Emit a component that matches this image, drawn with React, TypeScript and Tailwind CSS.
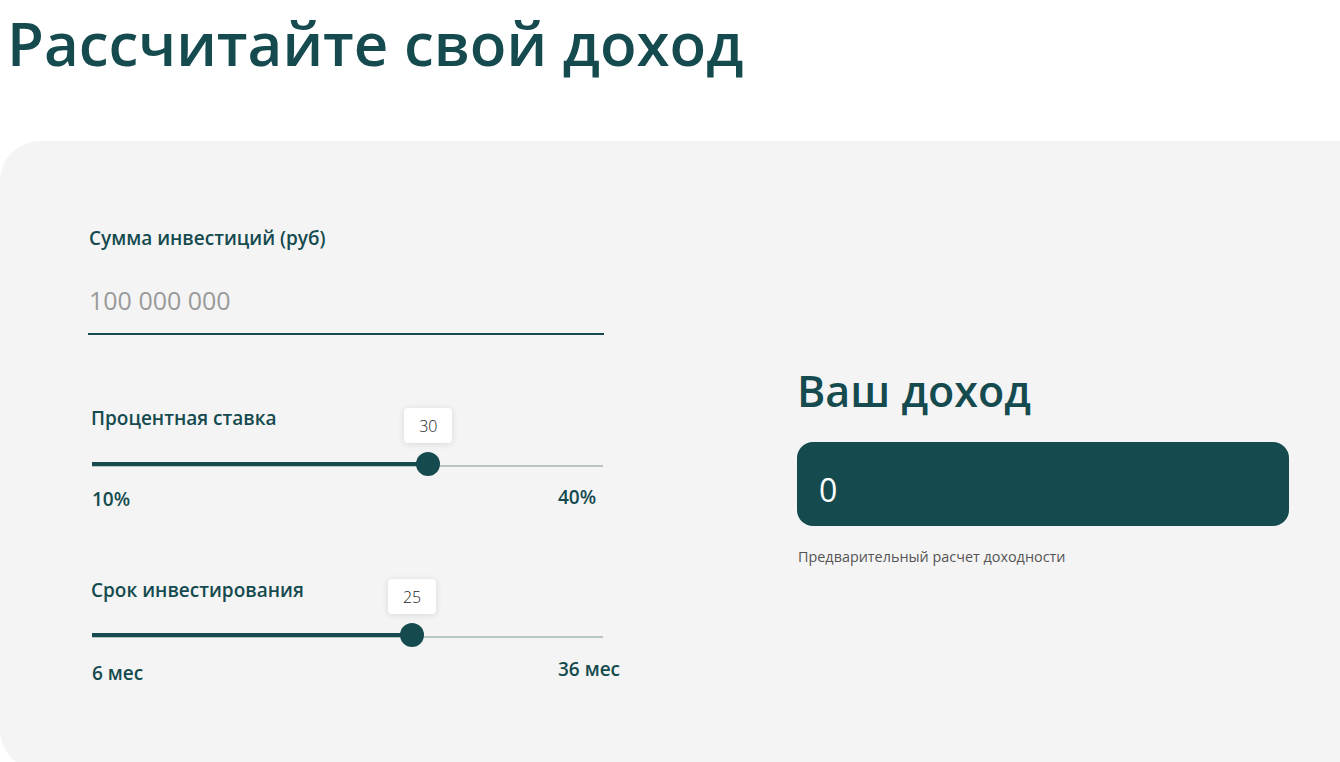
import React from "react";

function Slider({
  label,
  value,
  min,
  max,
  minLabel,
  maxLabel,
  labelGap,
  bottomGap,
  rightRaise,
}: {
  label: string;
  value: number;
  min: number;
  max: number;
  minLabel: string;
  maxLabel: string;
  labelGap: string;
  bottomGap: string;
  rightRaise: string;
}) {
  const width = 512;
  const thumb = 24;
  const pct = (value - min) / (max - min);
  const center = pct * (width - thumb) + thumb / 2;
  return (
    <div className="w-[512px]">
      <div className="text-[19px] leading-[24px] font-semibold text-[#154b4f]">{label}</div>
      <div className={`relative h-[24px] w-[512px] ${labelGap}`}>
        <div className="absolute left-[1px] right-0 top-[13px] h-[2px] bg-[#b7c5c5]" />
        <div
          className="absolute left-[1px] top-[10px] h-[4px] bg-[#154b4f]"
          style={{ width: center }}
        />
        <div
          className="absolute top-0 h-[24px] w-[24px] rounded-full bg-[#154b4f]"
          style={{ left: center - thumb / 2 }}
        />
        <div
          className="absolute top-[-44px] flex h-[35px] w-[48px] items-center justify-center rounded-[4px] bg-white text-[16px] font-light text-[#222] shadow-[0_1px_6px_rgba(0,0,0,0.12)]"
          style={{ left: center - 24 }}
        >
          {value}
        </div>
      </div>
      <div className={`flex items-start justify-between ${bottomGap}`}>
        <div className="pl-[1px] text-[19px] leading-[24px] font-semibold text-[#154b4f]">{minLabel}</div>
        <div className={`w-[45px] whitespace-nowrap text-[19px] leading-[24px] font-semibold text-[#154b4f] ${rightRaise}`}>
          {maxLabel}
        </div>
      </div>
    </div>
  );
}

export default function App() {
  return (
    <div
      className="h-screen overflow-hidden bg-white"
      style={{ fontFamily: '"Open Sans", "Noto Sans", sans-serif' }}
    >
      <h1 className="pl-[7px] text-[60px] leading-[86px] font-semibold text-[#154b4f]">
        Рассчитайте свой доход
      </h1>
      <div className="mt-[55px] flex h-[629px] items-start rounded-l-[40px] bg-[#f4f4f4] pl-[88px]">
        <div className="w-[516px] pt-[85px]">
          <div className="pl-[1px] text-[19px] leading-[24px] font-semibold text-[#154b4f]">
            Сумма инвестиций (руб)
          </div>
          <input
            className="mt-[34px] box-border h-[51px] w-[516px] border-b-2 border-[#154b4f] bg-transparent pb-[17px] pl-[1px] text-[25px] leading-[32px] text-[#333] outline-none placeholder:text-[#9a9a9a]"
            placeholder="100 000 000"
          />
          <div className="mt-[71px] pl-[3px]">
            <Slider
              label="Процентная ставка"
              value={30}
              min={10}
              max={40}
              minLabel="10%"
              maxLabel="40%"
              labelGap="mt-[22px]"
              bottomGap="mt-[11px]"
              rightRaise="-mt-[2px]"
            />
            <div className="mt-[67px]">
              <Slider
                label="Срок инвестирования"
                value={25}
                min={6}
                max={36}
                minLabel="6 мес"
                maxLabel="36 мес"
                labelGap="mt-[21px]"
                bottomGap="mt-[14px]"
                rightRaise="-mt-[4px]"
              />
            </div>
          </div>
        </div>
        <div className="ml-[193px] w-[492px] pt-[224px]">
          <div className="text-[43px] leading-[52px] font-semibold text-[#154b4f]">Ваш доход</div>
          <div className="mt-[25px] h-[84px] rounded-[16px] bg-[#154b4f] pl-[22px] pt-[26px] text-[32px] leading-[44px] text-white">
            0
          </div>
          <div className="mt-[21px] pl-[1px] text-[14.4px] leading-[20px] text-[#555]">
            Предварительный расчет доходности
          </div>
        </div>
      </div>
    </div>
  );
}
